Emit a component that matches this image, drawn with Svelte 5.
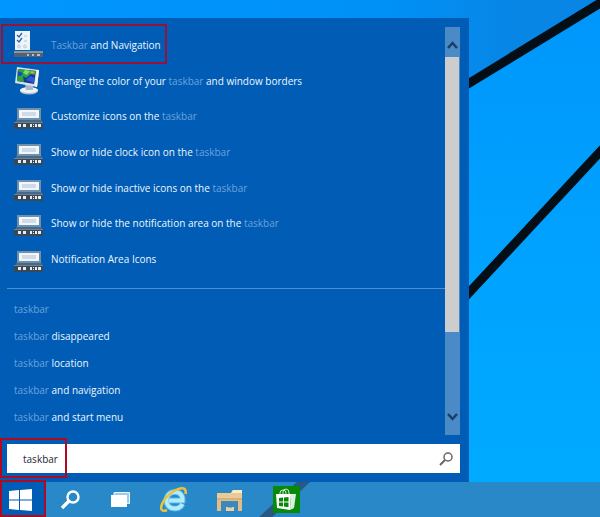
<script lang="ts">
  let query = $state('taskbar');

  const settings = [
    { id: 1, icon: 'checklist', text: 'Taskbar and Navigation' },
    { id: 2, icon: 'display', text: 'Change the color of your taskbar and window borders' },
    { id: 3, icon: 'tray', text: 'Customize icons on the taskbar' },
    { id: 4, icon: 'tray', text: 'Show or hide clock icon on the taskbar' },
    { id: 5, icon: 'tray', text: 'Show or hide inactive icons on the taskbar' },
    { id: 6, icon: 'tray', text: 'Show or hide the notification area on the taskbar' },
    { id: 7, icon: 'tray', text: 'Notification Area Icons' }
  ];

  const suggestions = [
    'taskbar',
    'taskbar disappeared',
    'taskbar location',
    'taskbar and navigation',
    'taskbar and start menu'
  ];

  // keeps the matched word as its own part
  function split(text: string) {
    return text.split(/(taskbar)/i).filter(Boolean);
  }

  function isMatch(part: string) {
    return part.toLowerCase() === 'taskbar';
  }
</script>

{#snippet label(text: string)}
  <span class="label">{#each split(text) as part}<span class:match={isMatch(part)}>{part}</span>{/each}</span>
{/snippet}

{#snippet icon(name: string)}
  {#if name === 'checklist'}
    <svg class="icon" viewBox="0 0 29 28" aria-hidden="true">
      <path d="M1 0H16V19H1Z" fill="#eef4fa" />
      <path d="M3 4l2 2 3-4M3 9l2 2 3-4" fill="none" stroke="#2a68ac" stroke-width="1.400" />
      <path d="M10 5h3M10 10h3" stroke="#b9c6d2" />
      <circle cx="5" cy="15.500" r="1.400" fill="none" stroke="#aab8c6" stroke-width="0.800" />
      <circle cx="11" cy="15.500" r="1.400" fill="none" stroke="#aab8c6" stroke-width="0.800" />
      <path d="M0 20H29V26H0Z" fill="#56616c" />
      <path d="M0 20H29V22H0Z" fill="#8c969f" />
      <path d="M13 23h2v2h-2zM18 23h2v2h-2zM23 23h3v2h-3z" fill="#b9bfc4" />
    </svg>
  {:else if name === 'display'}
    <svg class="icon" viewBox="0 0 29 28" aria-hidden="true">
      <ellipse cx="15" cy="24" rx="9" ry="3.500" fill="#b3c0cd" />
      <ellipse cx="15" cy="23" rx="9" ry="3" fill="#eef2f6" />
      <path d="M11 17l8 2 0 4h-7z" fill="#a9b8c7" />
      <path d="M3 0L25 3L23 20L1 16Z" fill="#d8e1e9" />
      <path d="M4 2L22 4L20 17L3 14Z" fill="#1636a0" />
      <path d="M4 2L22 4L21 8L17 7L12 11L9 9L10 15L3 14Z" fill="#2ba540" />
      <path d="M11 3l5 1-3 4-4-2z" fill="#7edc6c" />
      <path d="M12 13l4-4 5 2-1 5z" fill="#2e59cf" />
      <path d="M4 4l5 2-2 3-3 0z" fill="#1d4ab9" />
      <path d="M17 4l4 1-2 2-3-1z" fill="#d3a53b" />
      <path d="M23 3l2 0-2 17-2-1z" fill="#f6f8fa" />
    </svg>
  {:else}
    <svg class="icon" viewBox="0 0 29 28" aria-hidden="true">
      <path d="M3 6H27V18H3Z" fill="#6f90ab" />
      <path d="M5 8H25V16H5Z" fill="#f2f6fa" />
      <path d="M8 11H22M8 13H22" stroke="#a9c0d6" />
      <path d="M2 18H28V20H2Z" fill="#46698a" />
      <path d="M0 21H29V27H0Z" fill="#3a4856" />
      <path d="M0 20H29V21H0Z" fill="#6d8192" />
      <path d="M4 22h3v3h-3zM9 22h3v3h-3zM16 22h2v3h-2zM19 22h1v1h-1zM19 24h1v1h-1zM21 22h2v3h-2zM24 22h3v3h-3z" fill="#e6ebef" />
    </svg>
  {/if}
{/snippet}

<div class="page">
  <svg class="wallpaper" viewBox="0 0 600 517" preserveAspectRatio="xMaxYMax slice" aria-hidden="true">
    <defs>
      <linearGradient id="sky" x1="0" y1="0" x2="0" y2="1">
        <stop offset="0" stop-color="#0096fb" />
        <stop offset="0.5" stop-color="#00a2ff" />
        <stop offset="1" stop-color="#00acff" />
      </linearGradient>
      <linearGradient id="shade" x1="0" y1="0" x2="1" y2="0">
        <stop offset="0" stop-color="#0096ff" />
        <stop offset="0.65" stop-color="#0091f6" />
        <stop offset="0.85" stop-color="#0786e6" />
        <stop offset="1" stop-color="#0786e6" />
      </linearGradient>
    </defs>
    <rect width="600" height="517" fill="url(#sky)" />
    <path d="M0 0H600V3L469 83L0 369Z" fill="url(#shade)" />
    <path d="M440 101L610 -3" stroke="#040e16" stroke-width="9" />
    <path d="M440 324L610 141M256 526L310 476" stroke="#040e16" stroke-width="9" />
  </svg>

  <main class="desktop">
    <section class="menu">
      <div class="pane">
        <div class="lists">
          <ul class="settings">
            {#each settings as item (item.id)}
              <li>
                <button class="setting" class:marked={item.id === 1}>
                  {@render icon(item.icon)}
                  {@render label(item.text)}
                </button>
              </li>
            {/each}
          </ul>
          <ul class="suggestions">
            {#each suggestions as text}
              <li><button class="suggestion">{@render label(text)}</button></li>
            {/each}
          </ul>
        </div>
        <div class="scrollbar">
          <button class="arrow" aria-label="Scroll up">
            <svg viewBox="0 0 15 30"><path d="M3 21L7.500 16L12 21" /></svg>
          </button>
          <div class="track"><div class="thumb"></div></div>
          <button class="arrow" aria-label="Scroll down">
            <svg viewBox="0 0 15 30"><path d="M3 9L7.500 14L12 9" /></svg>
          </button>
        </div>
      </div>

      <form class="search" onsubmit={(e) => e.preventDefault()}>
        <input type="text" aria-label="Search" bind:value={query} autocomplete="off" />
        <button type="submit" aria-label="Search">
          <svg viewBox="0 0 14 14" width="14" height="14">
            <circle cx="9" cy="5" r="4" fill="none" stroke="#666" stroke-width="1.500" />
            <path d="M6 8L1 13" stroke="#666" stroke-width="2" />
          </svg>
        </button>
      </form>
    </section>
  </main>

  <nav class="taskbar">
    <button class="start" aria-label="Start">
      <svg viewBox="0 0 24 22" width="24" height="22">
        <path d="M0 2L10 1V10.500H0ZM11 1L23 0V10.500H11ZM0 11.500H10V21L0 20ZM11 11.500H23V22L11 21Z" fill="#fff" />
      </svg>
    </button>
    <button class="system" aria-label="Search">
      <svg viewBox="0 0 20 20" width="20" height="20">
        <circle cx="12" cy="7" r="5.500" fill="none" stroke="#fff" stroke-width="2.400" />
        <path d="M8 11L1 18" stroke="#fff" stroke-width="3.400" />
      </svg>
    </button>
    <button class="system" aria-label="Task view">
      <svg viewBox="0 0 20 16" width="20" height="16">
        <path d="M3 0.500H18.500V11.500H3Z" fill="#9fcbe8" stroke="#e8f4fb" />
        <path d="M0 3H16V15H0Z" fill="#fff" />
      </svg>
    </button>
    <button class="app" aria-label="Internet Explorer">
      <svg viewBox="0 0 28 28" width="28" height="28">
        <path d="M22.500 18C21 21 18.500 22.500 15 22.500C9.500 22.500 6.500 19 6.500 14.500C6.500 9.500 10 6 15 6C20 6 23 9.500 22.500 14.500H9" fill="none" stroke="#55b4e4" stroke-width="6" />
        <path d="M22.500 18C21 21 18.500 22.500 15 22.500C9.500 22.500 6.500 19 6.500 14.500C6.500 9.500 10 6 15 6C20 6 23 9.500 22.500 14.500H9" fill="none" stroke="#b4ebfb" stroke-width="4" />
        <path d="M25.500 8C26.500 3 24 1.500 20 2.500C13 4 5.500 10.500 2.500 17C0 22.500 1 26.500 7 24" fill="none" stroke="#eac23c" stroke-width="2.600" />
      </svg>
    </button>
    <button class="app" aria-label="File Explorer">
      <svg viewBox="0 0 28 24" width="28" height="24">
        <path d="M1 5H15L17 2H26V23H22V13H5V23H1Z" fill="#e3bd86" />
        <path d="M1 5H26V11H1Z" fill="#ecca96" />
        <path d="M15 5L17 2H26V5Z" fill="#f8ecc8" />
        <path d="M1 10H26V12H1Z" fill="#d6b07c" />
        <path d="M5 13H22V23H5Z" fill="#3b88bd" />
        <path d="M10 19H18V23H10Z" fill="#ecd0a2" />
        <path d="M12 19H16V20H12Z" fill="#8fa9b0" />
      </svg>
    </button>
    <button class="app" aria-label="Store">
      <svg viewBox="0 0 27 27" width="27" height="27">
        <rect width="27" height="27" fill="#078a0a" />
        <path d="M7 9V7Q7 4 10 4Q13 4 13 7V9M10 8V6Q10 3 13 3Q16 3 16 7V9" fill="none" stroke="#cfe8cf" />
        <path d="M3 8H18L17 24L4 22Z" fill="#fff" />
        <path d="M18 8L23 8L21 22L17 24Z" fill="#dcefdc" />
        <path d="M6 12L10 11.600V15.500H6ZM11 11.500L15.500 11V15.500H11ZM6 16.500H10V20.500L6 20ZM11 16.500H15.500V21.200L11 20.600Z" fill="#078a0a" />
      </svg>
    </button>
  </nav>
</div>

<style>
  :global(*, *::before, *::after) {
    box-sizing: border-box;
    margin: 0;
    padding: 0;
  }

  .page {
    --menu: #005cb4;
    --frame: #b00a20;
    position: relative;
    display: flex;
    flex-direction: column;
    min-height: 100vh;
    overflow: hidden;
    font-family: 'Open Sans', 'Noto Sans', sans-serif;
    font-size: 10px;
    line-height: 16px;
  }

  .wallpaper {
    position: absolute;
    inset: 0;
    width: 100%;
    height: 100%;
  }

  ul {
    list-style: none;
  }

  button {
    border: none;
    background: transparent;
    color: inherit;
    font: inherit;
    text-align: left;
    cursor: pointer;
  }

  svg {
    display: block;
    flex-shrink: 0;
  }

  .desktop {
    position: relative;
    flex: 1;
    display: flex;
    align-items: flex-end;
  }

  /* START MENU */
  .menu {
    display: flex;
    flex-direction: column;
    gap: 9px;
    width: 100%;
    max-width: 469px;
    padding: 9px 9px 9px 7px;
    background: var(--menu);
    color: #ecf7ff;
  }

  .pane {
    display: flex;
  }

  .lists {
    flex: 1;
    padding-bottom: 5px;
  }

  .settings {
    display: grid;
    grid-template-rows: repeat(7, 1fr);
    height: 250px;
  }

  .setting {
    position: relative;
    display: flex;
    align-items: center;
    gap: 8px;
    height: 100%;
    padding: 0 6px 0 7px;
  }

  .icon {
    width: 29px;
    height: 28px;
  }

  .label {
    white-space: pre;
  }

  .match {
    color: #6aa3dc;
  }

  .suggestions {
    display: grid;
    grid-template-rows: repeat(5, 1fr);
    height: 142px;
    margin-top: 11px;
    padding-top: 7px;
    border-top: 1px solid #4a90d2;
  }

  .suggestion {
    display: flex;
    align-items: center;
    height: 100%;
    padding: 0 7px;
  }

  /* red frames drawn over the marked parts */
  .marked::after,
  .search::after,
  .start::after {
    content: '';
    position: absolute;
    border: 2px solid var(--frame);
    pointer-events: none;
  }

  .marked::after {
    inset: -3px 0 -1px -6px;
    border-color: #951238;
  }

  .search::after {
    top: -6px;
    bottom: -5px;
    left: -7px;
    width: 67px;
  }

  .start::after {
    inset: -2px 0 0 0;
  }

  .scrollbar {
    display: flex;
    flex-direction: column;
    width: 15px;
    background: #4a8ac6;
  }

  .arrow {
    height: 30px;
  }

  .arrow path {
    fill: none;
    stroke: #173f66;
    stroke-width: 2.5;
  }

  .track {
    flex: 1;
  }

  .thumb {
    width: 14px;
    height: 79%;
    background: #cdcdcd;
  }

  .search {
    position: relative;
    display: flex;
    height: 29px;
    background: #fff;
  }

  .search input {
    flex: 1;
    min-width: 0;
    padding: 0 16px;
    border: none;
    outline: none;
    background: transparent;
    color: #1c2733;
    font: inherit;
  }

  .search button {
    display: flex;
    align-items: center;
    padding: 0 7px;
  }

  /* TASKBAR */
  .taskbar {
    position: relative;
    display: flex;
    height: 35px;
    background: rgba(57, 121, 177, 0.7);
  }

  .taskbar button {
    position: relative;
    display: flex;
    align-items: center;
    justify-content: center;
  }

  .taskbar .start {
    width: 46px;
    padding-right: 4px;
    background: var(--menu);
  }

  .system {
    width: 50px;
  }

  .app {
    width: 56px;
  }
</style>
